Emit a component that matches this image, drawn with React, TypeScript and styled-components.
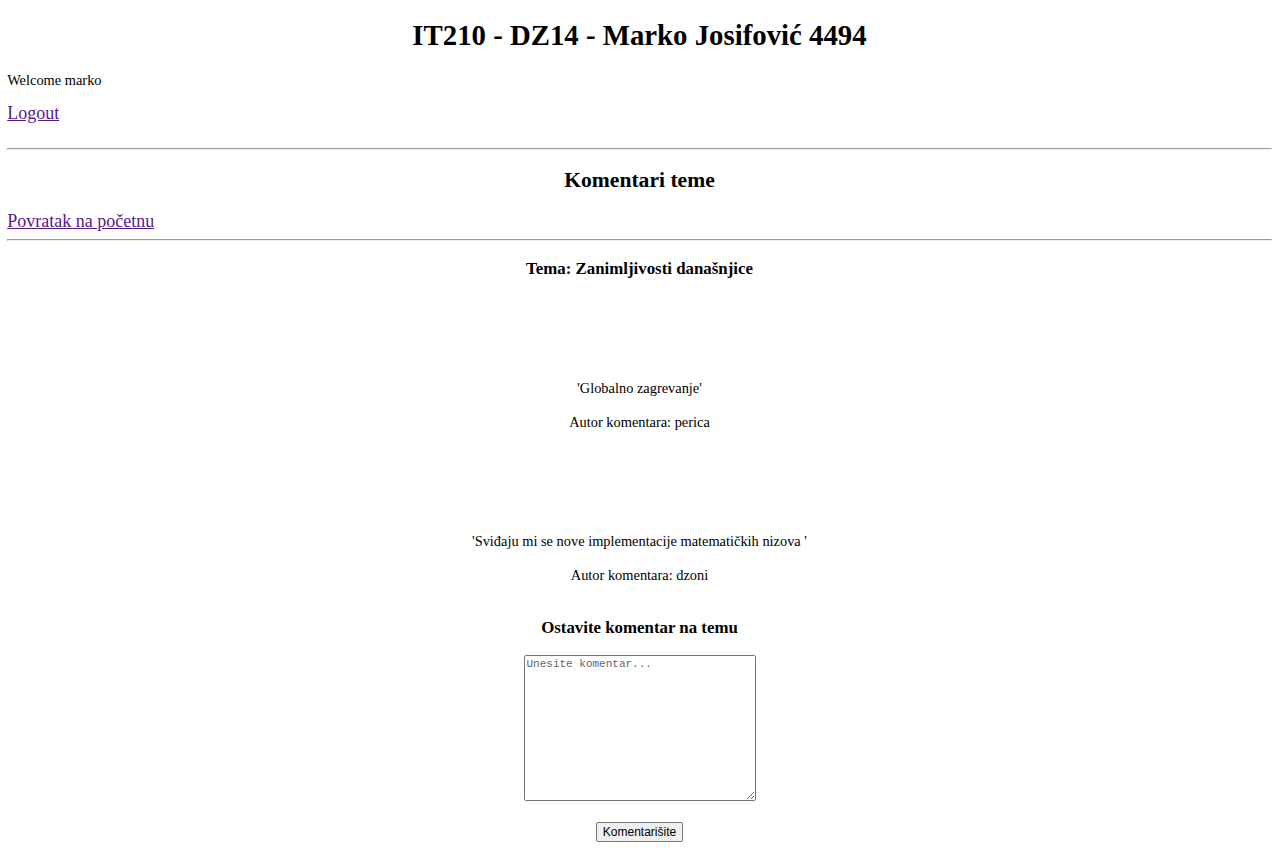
import React from "react";
import styled, { createGlobalStyle } from "styled-components";

const GlobalStyle = createGlobalStyle`
  html, body {
    background: #ffffff;
  }
  body {
    margin: 7.2px;
    font-family: "Liberation Serif", "Times New Roman", serif;
    font-size: 14.4px;
    color: #000000;
  }
`;

const Page = styled.div`
  display: block;
`;

const Title = styled.h1`
  font-size: 28.8px;
  font-weight: bold;
  text-align: center;
  margin: 12.3px 0 19.3px;
`;

const Welcome = styled.p`
  margin: 14.4px 0;
`;

const LinkLine = styled.div<{ $after?: number }>`
  font-size: 18px;
  margin: 0 0 ${(p) => p.$after ?? 0}px;
`;

const PageLink = styled.a`
  color: #551a8b;
  text-decoration: underline;
  cursor: pointer;
`;

const Divider = styled.hr`
  height: 0;
  margin: 7.2px 0;
  border-style: solid;
  border-width: 1px;
  border-color: #9a9a9a #eeeeee #eeeeee #9a9a9a;
`;

const SectionTitle = styled.h2`
  font-size: 21.6px;
  font-weight: bold;
  text-align: center;
  margin: 17.9px 0;
`;

const SubTitle = styled.h3<{ $top?: number }>`
  font-size: 16.85px;
  font-weight: bold;
  text-align: center;
  margin: ${(p) => p.$top ?? 16.85}px 0 16.85px;
`;

const Comment = styled.div`
  margin-top: 101.5px;
  text-align: center;
`;

const CommentText = styled.p`
  margin: 0;
`;

const Author = styled.p`
  margin: 17.4px 0 0;
`;

const CommentForm = styled.form`
  display: flex;
  flex-direction: column;
  align-items: center;
  margin-top: 17px;
`;

const CommentBox = styled.textarea`
  box-sizing: border-box;
  width: 232px;
  height: 146px;
  padding: 2px;
  border: 1px solid #767676;
  border-radius: 2px;
  font-family: "Liberation Mono", "DejaVu Sans Mono", monospace;
  font-size: 11px;
  color: #000;
  background: #fff;
  resize: both;
  &::placeholder {
    color: #666666;
  }
`;

const SubmitButton = styled.button`
  box-sizing: border-box;
  margin-top: 21px;
  height: 20px;
  padding: 0 6px;
  font-family: "Liberation Sans", Arial, sans-serif;
  font-size: 12px;
  color: #000;
  background: #efefef;
  border: 1px solid #767676;
  border-radius: 2px;
`;

type CommentData = { text: string; author: string };

const comments: CommentData[] = [
  { text: "'Globalno zagrevanje'", author: "perica" },
  { text: "'Sviđaju mi se nove implementacije matematičkih nizova '", author: "dzoni" },
];

export default function App() {
  return (
    <Page>
      <GlobalStyle />
      <Title>IT210 - DZ14 - Marko Josifović 4494</Title>
      <Welcome>Welcome marko</Welcome>
      <LinkLine $after={23.6}>
        <PageLink href="#">Logout</PageLink>
      </LinkLine>
      <Divider />
      <SectionTitle>Komentari teme</SectionTitle>
      <LinkLine>
        <PageLink href="#">Povratak na početnu</PageLink>
      </LinkLine>
      <Divider />
      <SubTitle $top={17.85}>Tema: Zanimljivosti današnjice</SubTitle>
      {comments.map((c, i) => (
        <Comment key={i}>
          <CommentText>{c.text}</CommentText>
          <Author>Autor komentara: {c.author}</Author>
        </Comment>
      ))}
      <SubTitle $top={34}>Ostavite komentar na temu</SubTitle>
      <CommentForm onSubmit={(e) => e.preventDefault()}>
        <CommentBox placeholder="Unesite komentar..." />
        <SubmitButton type="submit">Komentarišite</SubmitButton>
      </CommentForm>
    </Page>
  );
}
